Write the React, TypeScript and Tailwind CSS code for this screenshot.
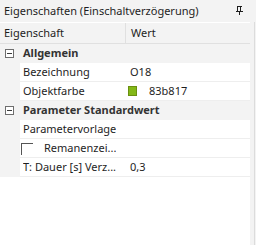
import React from 'react';

type Row =
  | { kind: 'group'; label: string }
  | { kind: 'prop'; label: string; value?: string; color?: string; checkbox?: boolean };

const rows: Row[] = [
  { kind: 'group', label: 'Allgemein' },
  { kind: 'prop', label: 'Bezeichnung', value: 'O18' },
  { kind: 'prop', label: 'Objektfarbe', value: '83b817', color: '#83b817' },
  { kind: 'group', label: 'Parameter Standardwert' },
  { kind: 'prop', label: 'Parametervorlage' },
  { kind: 'prop', label: 'Remanenzei...', checkbox: true },
  { kind: 'prop', label: 'T: Dauer [s] Verz...', value: '0,3' },
];

function Collapse() {
  return (
    <span className="flex h-[9px] w-[9px] items-center justify-center border border-[#6e6e6e] bg-white">
      <span className="h-px w-[5px] bg-[#3c3c3c]" />
    </span>
  );
}

export default function App() {
  return (
    <div
      className="flex h-[245px] w-[256px] flex-col overflow-hidden bg-[#f3f3f3] text-[11px] text-[#1e1e1e]"
      style={{ fontFamily: '"Segoe UI", "Noto Sans", "Open Sans", sans-serif' }}
    >
      <div className="flex h-[22px] items-center justify-between pl-[4px] pr-[13px]">
        <span>Eigenschaften (Einschaltverzögerung)</span>
        <svg width="7" height="9" viewBox="0 0 7 9" className="mb-[1px]">
          <path d="M1 0.5h5M1.5 0.5v4.5M4.5 0.5v4.5M0 5.5h7M3.5 5.5v3.5" stroke="#1e1e1e" strokeWidth="1" fill="none" />
        </svg>
      </div>
      <div className="flex flex-1">
        <div className="flex w-[250px] flex-col">
          <div className="h-px bg-white" />
          <div className="flex h-[21px] border-b border-[#e0e0e0]">
            <div className="flex w-[126px] items-center border-r border-[#e0e0e0] pl-[4px]">Eigenschaft</div>
            <div className="flex flex-1 items-center pl-[5px]">Wert</div>
          </div>
          {rows.map((r) =>
            r.kind === 'group' ? (
              <div key={r.label} className="flex h-[19px] items-center">
                <div className="flex w-[20px] justify-center pr-[2px]">
                  <Collapse />
                </div>
                <span className="pl-[3px] font-bold text-[#333]">{r.label}</span>
              </div>
            ) : (
              <div key={r.label} className="flex h-[19px]">
                <div className="w-[20px]" />
                <div className="flex w-[107px] items-center border-b border-[#eeeeee] bg-white pl-[3px]">
                  {r.checkbox && (
                    <span className="mr-[11px] ml-[-2px] mt-[2px] h-[12px] w-[12px] border-l border-t border-[#555]" />
                  )}
                  <span className="truncate">{r.label}</span>
                </div>
                <div className="flex flex-1 items-center border-b border-[#eeeeee] bg-white pl-[1px]">
                  {r.color && (
                    <span className="mr-[12px] h-[10px] w-[9px] border border-[#6a8f10]" style={{ background: r.color }} />
                  )}
                  {r.value && <span className={r.color ? '' : 'pl-[2px]'}>{r.value}</span>}
                </div>
              </div>
            )
          )}
          <div className="flex-1 bg-white" />
        </div>
        <div className="w-[4px]" />
        <div className="w-px bg-[#dcdcdc]" />
        <div className="w-px bg-[#f3f3f3]" />
      </div>
    </div>
  );
}
